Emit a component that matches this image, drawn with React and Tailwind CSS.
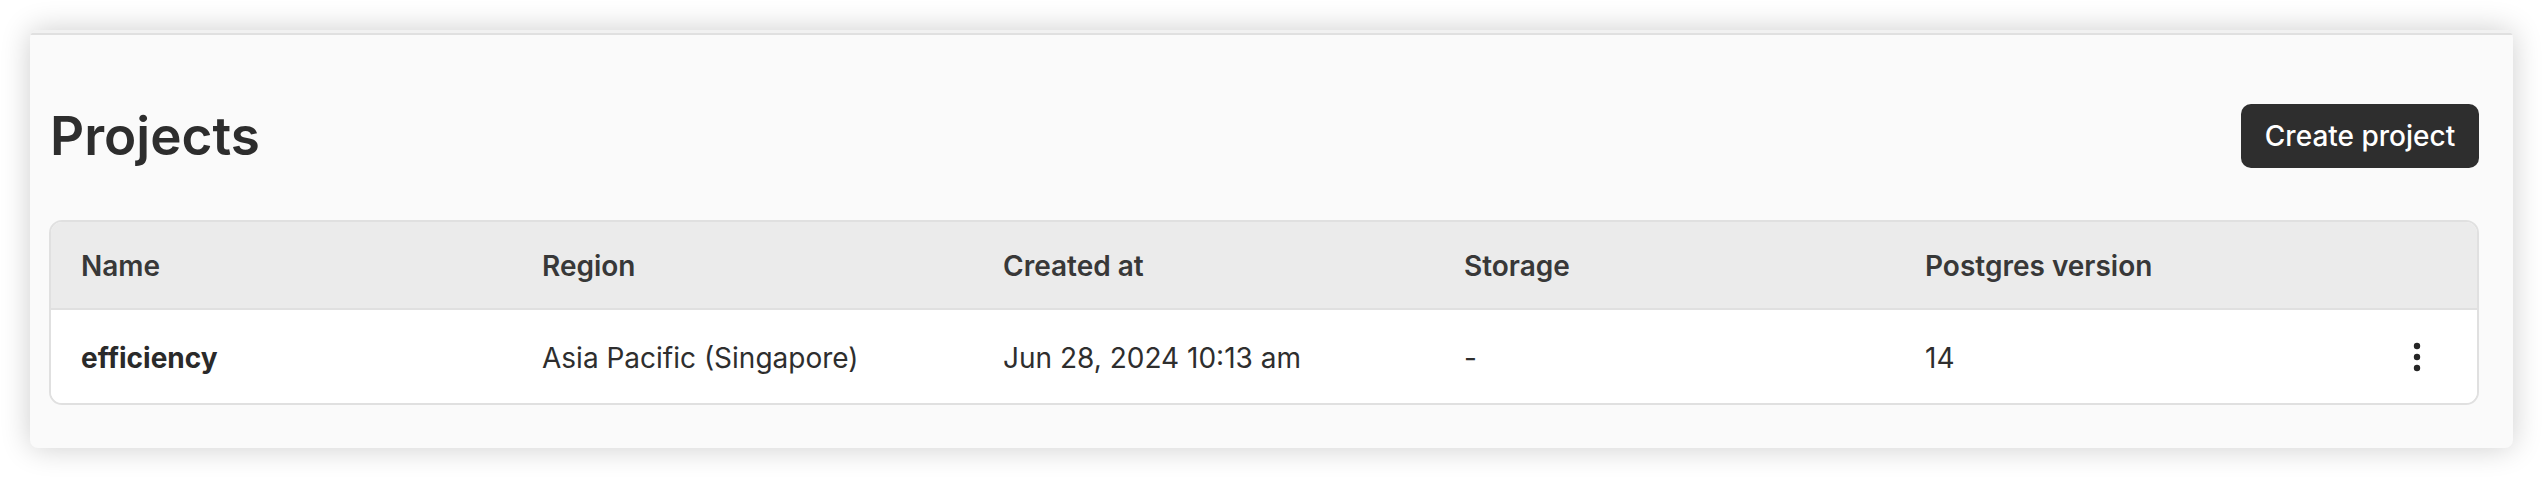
export default function App() {
  const cols = "grid grid-cols-[461px_461px_461px_461px_461px_1fr]";
  return (
    <div
      className="w-[2544px] h-[478px] bg-white pt-[30px] pl-[30px] pr-[31px] pb-[30px]"
      style={{ fontFamily: "Inter, 'Noto Sans', sans-serif" }}
    >
      <div className="h-[418px] rounded-[8px] bg-[#fafafa] shadow-[0_0_30px_rgba(0,0,0,0.2)] overflow-hidden flex flex-col">
        <div className="h-[3px] bg-[#f1f1f1]" />
        <div className="h-[2px] bg-[#e0e0e0]" />
        <div className="pl-[19px] pr-[34px] pt-[69px]">
          <div className="flex items-center justify-between h-[64px]">
            <h1 className="text-[53px] leading-none font-semibold text-[#2d2d2d] pl-[1px]">
              Projects
            </h1>
            <button className="h-[64px] w-[238px] rounded-[10px] bg-[#2e2e2e] text-white text-[28px] font-medium flex items-center justify-center">
              Create project
            </button>
          </div>
          <div className="mt-[52px] rounded-[13px] border-2 border-[#e0e0e0] overflow-hidden">
            <div className={`${cols} h-[88px] items-center bg-[#ebebeb] border-b-2 border-[#e0e0e0] text-[28px] font-semibold text-[#383838]`}>
              <div className="pl-[30px] pt-[2px]">Name</div>
              <div className="pl-[30px] pt-[2px]">Region</div>
              <div className="pl-[30px] pt-[2px]">Created at</div>
              <div className="pl-[30px] pt-[2px]">Storage</div>
              <div className="pl-[30px] pt-[2px]">Postgres version</div>
              <div />
            </div>
            <div className={`${cols} h-[93px] items-center bg-white text-[28px] text-[#2e2e2e]`}>
              <div className="pl-[30px] pt-[2px] font-bold text-[#2a2a2a]">efficiency</div>
              <div className="pl-[30px] pt-[2px]">Asia Pacific (Singapore)</div>
              <div className="pl-[30px] pt-[2px]">Jun 28, 2024 10:13 am</div>
              <div className="pl-[30px] pt-[2px]">-</div>
              <div className="pl-[30px] pt-[2px]">14</div>
              <div className="flex items-center justify-center">
                <svg width="8" height="30" viewBox="0 0 8 30" aria-label="more">
                  <circle cx="4" cy="4" r="3.2" fill="#262626" />
                  <circle cx="4" cy="15" r="3.2" fill="#262626" />
                  <circle cx="4" cy="26" r="3.2" fill="#262626" />
                </svg>
              </div>
            </div>
          </div>
        </div>
      </div>
    </div>
  );
}
